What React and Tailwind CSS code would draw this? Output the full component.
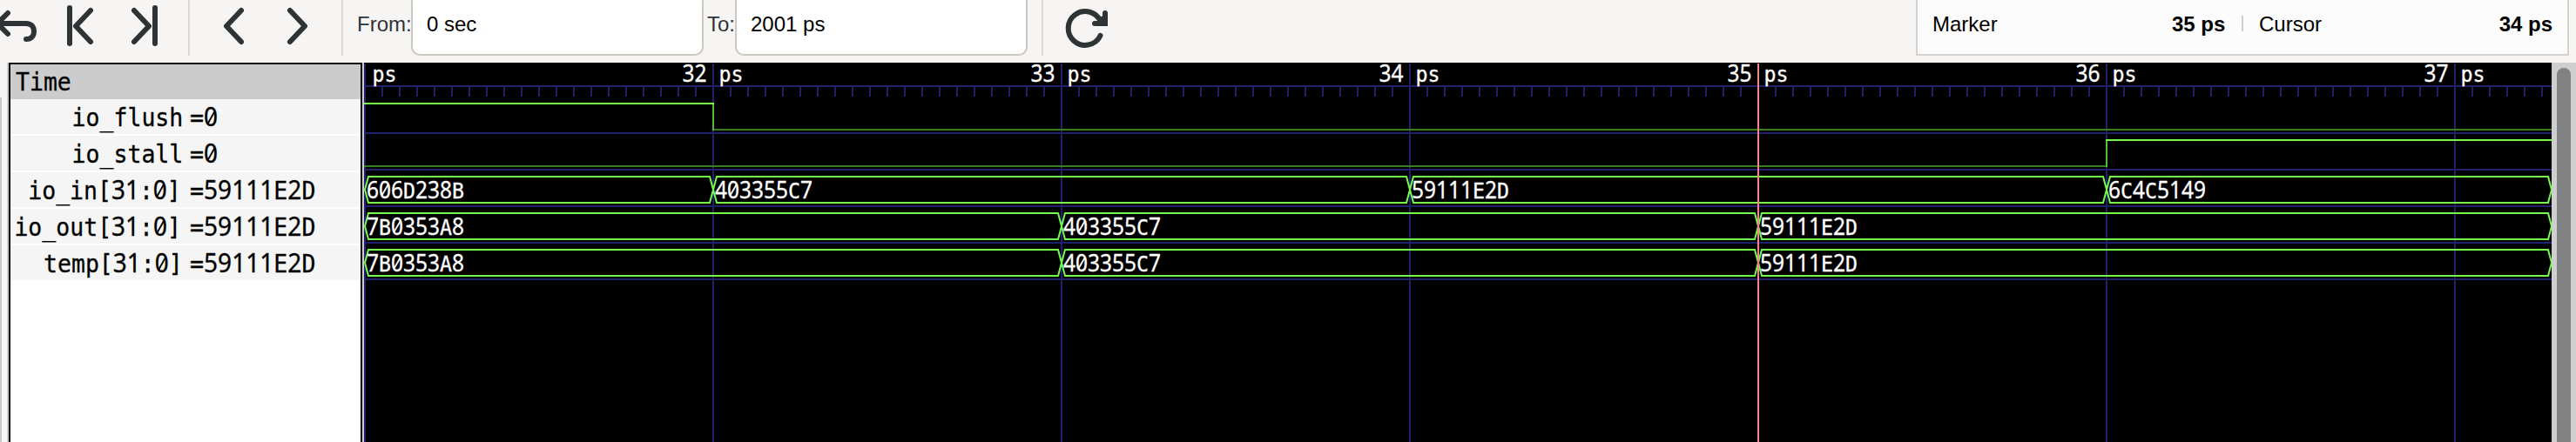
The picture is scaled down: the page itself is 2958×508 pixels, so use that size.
import React from "react";

const SIGNALS = [
  { name: "io_flush", value: "0", inset: "mr-[4px]" },
  { name: "io_stall", value: "0", inset: "mr-[4px]" },
  { name: "io_in[31:0]", value: "59111E2D", inset: "mr-[6px]" },
  { name: "io_out[31:0]", value: "59111E2D", inset: "mr-[6px]" },
  { name: "temp[31:0]", value: "59111E2D", inset: "mr-[4px]" },
];

const BUSES = [
  { base: 164, values: [[0, "606D238B"], [400, "403355C7"], [1200, "59111E2D"], [2000, "6C4C5149"]] },
  { base: 206, values: [[0, "7B0353A8"], [800, "403355C7"], [1600, "59111E2D"]] },
  { base: 248, values: [[0, "7B0353A8"], [800, "403355C7"], [1600, "59111E2D"]] },
];

const WIDTH = 2512;

const runs = (text) => text.match(/\d+|\D+/g) || [];

// Digits and letters come from two faces whose advances agree at these sizes;
// a zero carries a slash.
function Mono({ children }) {
  return (
    <span className="inline-block whitespace-pre font-['DejaVu_Sans_Mono',monospace] text-[28.5px] [-webkit-text-stroke:0.3px_black]">
      {(children.match(/0|[1-9]+|\D+/g) || []).map((r, i) =>
        r === "0" ? (
          <span key={i} className="relative inline-block font-['Noto_Sans',sans-serif] text-[30px] leading-none after:absolute after:left-[7.6px] after:top-[7.5px] after:h-[17px] after:w-[2px] after:rotate-[31deg] after:bg-black after:content-['']">0</span>
        ) : /\d/.test(r) ? (
          <span key={i} className="font-['Noto_Sans',sans-serif] text-[30px] leading-none">{r}</span>
        ) : (
          <span key={i}>{r}</span>
        )
      )}
    </span>
  );
}

function WaveText({ x, y, children }) {
  const zeros = [...children].flatMap((c, i) => (c === "0" ? [x + 14 * (i + 0.5)] : []));
  return (
    <g>
      <text transform={`translate(${x} ${y}) scale(0.92 1)`} fill="#fff" stroke="#fff" strokeWidth="0.3" className="whitespace-pre font-['DejaVu_Sans_Mono',monospace] text-[25.3px]">
        {runs(children).map((r, i) =>
          /\d/.test(r) ? (
            <tspan key={i} className="font-['Noto_Sans',sans-serif] text-[26.6px]">{r}</tspan>
          ) : (
            <tspan key={i}>{r}</tspan>
          )
        )}
      </text>
      {zeros.map((cx) => (
        <path key={cx} d={`M${cx - 3.8} ${y - 3}L${cx + 3.8} ${y - 16}`} stroke="#fff" strokeWidth="1.8" />
      ))}
    </g>
  );
}

function Icon({ width, children }) {
  return (
    <svg width={width} height="64" viewBox={`0 0 ${width} 64`} fill="none" stroke="#2e3436" strokeWidth="6" strokeLinecap="round" strokeLinejoin="round" className="block shrink-0">
      {children}
    </svg>
  );
}

const Separator = () => <div className="h-16 w-[2px] shrink-0 bg-[#dbd9d7]" />;

function Entry({ children }) {
  return (
    <div className="-mt-2 flex h-[72px] w-[336px] shrink-0 items-center rounded-[10px] border-2 border-[#cdc7c2] bg-white pl-4 text-black">
      {children}
    </div>
  );
}

function Toolbar() {
  return (
    <div className="flex h-[72px] w-full items-start bg-[#f6f5f4] font-['Liberation_Sans',Arial,sans-serif] text-[24px] leading-[56px] text-[#2e3436]">
      <Icon width={60}>
        <path d="M9 15L-3 27L9 39M-3 27H30C36 27 39 31 39 36S36 45 30 45" />
      </Icon>
      <Icon width={70}>
        <path d="M20 9V50M44 12L27 30L44 48" />
      </Icon>
      <Icon width={86}>
        <path d="M48 9V50M24 12L41 30L24 48" />
      </Icon>
      <Separator />
      <Icon width={88}>
        <path d="M59 12L42 30L59 48" />
      </Icon>
      <Icon width={86}>
        <path d="M27 12L44 30L27 48" />
      </Icon>
      <Separator />
      <span className="w-[78px] shrink-0 pl-4">From:</span>
      <Entry>0 sec</Entry>
      <span className="w-9 shrink-0 pl-1">To:</span>
      <Entry>2001 ps</Entry>
      <div className="w-4 shrink-0" />
      <Separator />
      <Icon width={92}>
        <path d="M65.5 41A19.4 19.4 0 1 1 66 25" />
        <path d="M71 15V27H59" />
        <path d="M64 20L74 16V30H62Z" fill="#2e3436" stroke="none" />
      </Icon>
      <div className="ml-auto mr-2 flex h-16 w-[750px] shrink-0 items-start border-2 border-t-0 border-[#d5d1cd] bg-[#fcfcfc] px-[17px] text-black">
        <span className="w-[275px]">Marker</span>
        <b className="w-[80px]">35 ps</b>
        <i className="mt-[18px] block h-[18px] w-[2px] bg-[#cfcfcf]" />
        <span className="ml-[18px]">Cursor</span>
        <b className="ml-auto">34 ps</b>
      </div>
    </div>
  );
}

function SignalList() {
  return (
    <div className="flex h-full w-[418px] shrink-0 bg-[#f6f5f4]">
      <div className="mt-10 w-[2px] bg-[#cdc7c2]" />
      <div className="ml-[6px] w-[2px] bg-[#cccccc]" />
      <div className="flex w-[406px] flex-col border-2 border-b-0 border-black bg-white text-black">
        <div className="h-10 bg-[#cccccc] pl-[6px] leading-[42px]">
          <div className="origin-left scale-x-[0.93]"><Mono>Time</Mono></div>
        </div>
        {SIGNALS.map((s) => (
          <div key={s.name} className="mb-[2px] flex h-10 bg-[#f5f5f5] leading-[44px]">
            <div className="flex w-[202px] shrink-0 justify-end">
              <div className={`${s.inset} origin-right scale-x-[0.93]`}><Mono>{s.name}</Mono></div>
            </div>
            <div className="ml-[4px] origin-left scale-x-[0.935]"><Mono>{"=" + s.value}</Mono></div>
          </div>
        ))}
      </div>
      <div className="w-[2px] bg-[#cccccc]" />
    </div>
  );
}

// A bus lane: hexagonal segments that cross at each value change.
function Bus({ base, values }) {
  const top = base - 33;
  const bottom = base - 3;
  const mid = base - 18;
  return (
    <g>
      {values.map(([start, text], i) => {
        const a = start + 1;
        const b = i + 1 < values.length ? values[i + 1][0] + 1 : WIDTH;
        return (
          <g key={start}>
            <path d={`M${a} ${mid}L${a + 4} ${top}H${b - 4}L${b} ${mid}L${b - 4} ${bottom}H${a + 4}Z`} fill="none" stroke="#75fb4c" strokeWidth="2" />
            <WaveText x={start + 3} y={base - 8}>{text}</WaveText>
          </g>
        );
      })}
    </g>
  );
}

function Waves() {
  const majors = [0, 1, 2, 3, 4, 5, 6];
  const ticks = Array.from({ length: 126 }, (_, i) => i).filter((i) => i % 20);
  return (
    <svg width={WIDTH} height="436" viewBox={`0 0 ${WIDTH} 436`} className="block shrink-0 overflow-visible bg-black">
      <g stroke="#21206c" strokeWidth="2">
        {majors.map((m) => <path key={m} d={`M${m * 400 + 1} 1V436`} />)}
        <path d={`M0 27H${WIDTH}`} />
        {ticks.map((t) => <path key={t} d={`M${t * 20 + 1} 28V39`} />)}
        {[81, 123, 165, 207, 249].map((y) => <path key={y} d={`M0 ${y}H${WIDTH}`} />)}
      </g>
      <g fill="none" strokeWidth="2">
        <path d={`M402 77H${WIDTH}M0 119H2000`} stroke="#377d22" />
        <path d="M401 46V78M2001 88V120" stroke="#56bc38" />
        <path d={`M0 47H402M2000 89H${WIDTH}`} stroke="#75fb4c" />
      </g>
      {BUSES.map((b) => <Bus key={b.base} {...b} />)}
      <path d="M1601 1V436" stroke="#f08784" strokeWidth="2" />
      {majors.map((m) => (
        <React.Fragment key={m}>
          {m > 0 && <WaveText x={m * 400 - 34.5} y={22}>{String(31 + m)}</WaveText>}
          <WaveText x={m === 0 ? 9.5 : m * 400 + 7.5} y={22}>ps</WaveText>
        </React.Fragment>
      ))}
    </svg>
  );
}

export default function App() {
  return (
    <div className="flex h-[508px] w-[2958px] flex-col overflow-hidden bg-[#f6f5f4]">
      <Toolbar />
      <div className="flex h-[436px]">
        <SignalList />
        <Waves />
        <div className="relative h-full w-7 shrink-0 bg-[#cecece] pl-[6px] pt-[6px]">
          <div className="h-[430px] w-4 rounded-t-full bg-[#808182]" />
        </div>
      </div>
    </div>
  );
}
